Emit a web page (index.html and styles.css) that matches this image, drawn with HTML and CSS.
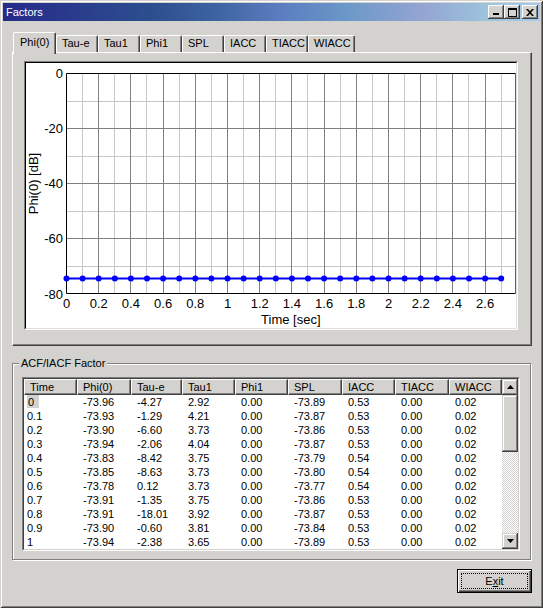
FILE: index.html
```html
<!DOCTYPE html>
<html>
<head>
<meta charset="utf-8">
<title>Factors</title>
<link rel="stylesheet" href="styles.css">
</head>
<body>
<div class="window">
  <div class="titlebar">
    <span class="title">Factors</span>
    <div class="caption-buttons">
      <span class="cbtn"><svg width="8" height="8" viewBox="0 0 8 8"><rect x="1" y="5" width="6" height="2" fill="#000"/></svg></span>
      <span class="cbtn"><svg width="9" height="9" viewBox="0 0 9 9"><rect x="0.5" y="0.5" width="8" height="8" fill="none" stroke="#000"/><rect x="0" y="0" width="9" height="2" fill="#000"/></svg></span>
      <span class="cbtn close"><svg width="8" height="7" viewBox="0 0 8 7"><path d="M0 0h2l2 2.2L6 0h2L5 3.5 8 7H6L4 4.8 2 7H0l3-3.5z" fill="#000"/></svg></span>
    </div>
  </div>
  <div class="main">
    <div class="tabs">
      <div class="tab selected">Phi(0)</div>
      <div class="tab">Tau-e</div>
      <div class="tab">Tau1</div>
      <div class="tab">Phi1</div>
      <div class="tab">SPL</div>
      <div class="tab">IACC</div>
      <div class="tab">TIACC</div>
      <div class="tab wide">WIACC</div>
    </div>
    <div class="tabpanel">
      <div class="chart">
        <div class="chart-inner">
          <svg class="plot" width="490" height="265" viewBox="0 0 490 265">
            <rect x="0" y="0" width="490" height="265" fill="#fff"/>
            <path d="M56.5 10.5V230.5M88.5 10.5V230.5M120.5 10.5V230.5M153.5 10.5V230.5M185.5 10.5V230.5M217.5 10.5V230.5M249.5 10.5V230.5M281.5 10.5V230.5M314.5 10.5V230.5M346.5 10.5V230.5M378.5 10.5V230.5M410.5 10.5V230.5M442.5 10.5V230.5M475.5 10.5V230.5M40.5 38.5H489.5M40.5 93.5H489.5M40.5 148.5H489.5M40.5 203.5H489.5" stroke="#c8c8c8" stroke-width="1" fill="none"/>
            <path d="M72.5 10.5V230.5M104.5 10.5V230.5M137.5 10.5V230.5M169.5 10.5V230.5M201.5 10.5V230.5M233.5 10.5V230.5M265.5 10.5V230.5M298.5 10.5V230.5M330.5 10.5V230.5M362.5 10.5V230.5M394.5 10.5V230.5M426.5 10.5V230.5M459.5 10.5V230.5M40.5 65.5H489.5M40.5 120.5H489.5M40.5 175.5H489.5" stroke="#808080" stroke-width="1" fill="none"/>
            <path d="M489.5 10.5V230.5" stroke="#606060" stroke-width="1"/>
            <path d="M40.5 10.5H489.5M40.5 10.5V230.5H489.5" stroke="#000" stroke-width="1" fill="none"/>
            <g class="ylab" text-anchor="end">
              <text x="37" y="15">0</text>
              <text x="37" y="70">-20</text>
              <text x="37" y="125">-40</text>
              <text x="37" y="180">-60</text>
              <text x="37" y="236">-80</text>
            </g>
            <g class="xlab" text-anchor="middle">
              <text x="40.5" y="245">0</text>
              <text x="72.7" y="245">0.2</text>
              <text x="104.9" y="245">0.4</text>
              <text x="137.1" y="245">0.6</text>
              <text x="169.3" y="245">0.8</text>
              <text x="201.5" y="245">1</text>
              <text x="233.7" y="245">1.2</text>
              <text x="265.9" y="245">1.4</text>
              <text x="298.1" y="245">1.6</text>
              <text x="330.3" y="245">1.8</text>
              <text x="362.5" y="245">2</text>
              <text x="394.7" y="245">2.2</text>
              <text x="426.9" y="245">2.4</text>
              <text x="459.1" y="245">2.6</text>
            </g>
            <text class="axis-title" x="264.8" y="261" text-anchor="middle">Time [sec]</text>
            <text class="axis-title" transform="translate(11.5 120.5) rotate(-90)" text-anchor="middle">Phi(0) [dB]</text>
            <polyline points="40.5,215.5 475.2,215.5" stroke="#0000ff" stroke-width="2" fill="none"/>
            <g fill="#0000ff">
              <circle cx="40.5" cy="215.5" r="3"/>
              <circle cx="56.6" cy="215.5" r="3"/>
              <circle cx="72.7" cy="215.5" r="3"/>
              <circle cx="88.8" cy="215.5" r="3"/>
              <circle cx="104.9" cy="215.5" r="3"/>
              <circle cx="121.0" cy="215.5" r="3"/>
              <circle cx="137.1" cy="215.5" r="3"/>
              <circle cx="153.2" cy="215.5" r="3"/>
              <circle cx="169.3" cy="215.5" r="3"/>
              <circle cx="185.4" cy="215.5" r="3"/>
              <circle cx="201.5" cy="215.5" r="3"/>
              <circle cx="217.6" cy="215.5" r="3"/>
              <circle cx="233.7" cy="215.5" r="3"/>
              <circle cx="249.8" cy="215.5" r="3"/>
              <circle cx="265.9" cy="215.5" r="3"/>
              <circle cx="282.0" cy="215.5" r="3"/>
              <circle cx="298.1" cy="215.5" r="3"/>
              <circle cx="314.2" cy="215.5" r="3"/>
              <circle cx="330.3" cy="215.5" r="3"/>
              <circle cx="346.4" cy="215.5" r="3"/>
              <circle cx="362.5" cy="215.5" r="3"/>
              <circle cx="378.6" cy="215.5" r="3"/>
              <circle cx="394.7" cy="215.5" r="3"/>
              <circle cx="410.8" cy="215.5" r="3"/>
              <circle cx="426.9" cy="215.5" r="3"/>
              <circle cx="443.0" cy="215.5" r="3"/>
              <circle cx="459.1" cy="215.5" r="3"/>
              <circle cx="475.2" cy="215.5" r="3"/>
            </g>
          </svg>
        </div>
      </div>
    </div>
    <div class="groupbox">
      <div class="group-label">ACF/IACF Factor</div>
      <div class="listview">
        <div class="lv-inner">
          <div class="lv-table">
            <div class="lv-header">
              <div class="hc">Time</div><div class="hc">Phi(0)</div><div class="hc">Tau-e</div><div class="hc">Tau1</div><div class="hc">Phi1</div><div class="hc">SPL</div><div class="hc">IACC</div><div class="hc">TIACC</div><div class="hc">WIACC</div>
            </div>
            <div class="lv-row"><span class="c t"><span class="sel">0</span></span><span class="c">-73.96</span><span class="c">-4.27</span><span class="c">2.92</span><span class="c">0.00</span><span class="c">-73.89</span><span class="c">0.53</span><span class="c">0.00</span><span class="c">0.02</span></div>
            <div class="lv-row"><span class="c t">0.1</span><span class="c">-73.93</span><span class="c">-1.29</span><span class="c">4.21</span><span class="c">0.00</span><span class="c">-73.87</span><span class="c">0.53</span><span class="c">0.00</span><span class="c">0.02</span></div>
            <div class="lv-row"><span class="c t">0.2</span><span class="c">-73.90</span><span class="c">-6.60</span><span class="c">3.73</span><span class="c">0.00</span><span class="c">-73.86</span><span class="c">0.53</span><span class="c">0.00</span><span class="c">0.02</span></div>
            <div class="lv-row"><span class="c t">0.3</span><span class="c">-73.94</span><span class="c">-2.06</span><span class="c">4.04</span><span class="c">0.00</span><span class="c">-73.87</span><span class="c">0.53</span><span class="c">0.00</span><span class="c">0.02</span></div>
            <div class="lv-row"><span class="c t">0.4</span><span class="c">-73.83</span><span class="c">-8.42</span><span class="c">3.75</span><span class="c">0.00</span><span class="c">-73.79</span><span class="c">0.54</span><span class="c">0.00</span><span class="c">0.02</span></div>
            <div class="lv-row"><span class="c t">0.5</span><span class="c">-73.85</span><span class="c">-8.63</span><span class="c">3.73</span><span class="c">0.00</span><span class="c">-73.80</span><span class="c">0.54</span><span class="c">0.00</span><span class="c">0.02</span></div>
            <div class="lv-row"><span class="c t">0.6</span><span class="c">-73.78</span><span class="c">0.12</span><span class="c">3.73</span><span class="c">0.00</span><span class="c">-73.77</span><span class="c">0.54</span><span class="c">0.00</span><span class="c">0.02</span></div>
            <div class="lv-row"><span class="c t">0.7</span><span class="c">-73.91</span><span class="c">-1.35</span><span class="c">3.75</span><span class="c">0.00</span><span class="c">-73.86</span><span class="c">0.53</span><span class="c">0.00</span><span class="c">0.02</span></div>
            <div class="lv-row"><span class="c t">0.8</span><span class="c">-73.91</span><span class="c">-18.01</span><span class="c">3.92</span><span class="c">0.00</span><span class="c">-73.87</span><span class="c">0.53</span><span class="c">0.00</span><span class="c">0.02</span></div>
            <div class="lv-row"><span class="c t">0.9</span><span class="c">-73.90</span><span class="c">-0.60</span><span class="c">3.81</span><span class="c">0.00</span><span class="c">-73.84</span><span class="c">0.53</span><span class="c">0.00</span><span class="c">0.02</span></div>
            <div class="lv-row"><span class="c t">1</span><span class="c">-73.94</span><span class="c">-2.38</span><span class="c">3.65</span><span class="c">0.00</span><span class="c">-73.89</span><span class="c">0.53</span><span class="c">0.00</span><span class="c">0.02</span></div>
          </div>
          <div class="vscroll">
            <div class="sb-btn"><svg width="7" height="4" viewBox="0 0 7 4"><path d="M3.5 0L7 4H0z" fill="#000"/></svg></div>
            <div class="sb-thumb"></div>
            <div class="sb-track"></div>
            <div class="sb-btn"><svg width="7" height="4" viewBox="0 0 7 4"><path d="M0 0H7L3.5 4z" fill="#000"/></svg></div>
          </div>
        </div>
      </div>
    </div>
    <div class="footer">
      <button class="btn default" type="button"><span class="focus">E<u>x</u>it</span></button>
    </div>
  </div>
</div>
</body>
</html>
```

FILE: styles.css
```css
* { box-sizing: border-box; }
html, body { margin: 0; padding: 0; }
body {
  width: 543px;
  height: 608px;
  overflow: hidden;
  background: #d4d2ce;
  font-family: "Liberation Sans", Arial, sans-serif;
  font-size: 11px;
  color: #000;
}
.window {
  width: 543px;
  height: 608px;
  padding: 3px;
  background: #d4d2ce;
  box-shadow: inset 1px 1px #d4d2ce, inset -1px -1px #404040, inset 2px 2px #fff, inset -2px -2px #808080;
  display: flex;
  flex-direction: column;
}
.titlebar {
  height: 18px;
  flex: none;
  display: flex;
  align-items: center;
  padding: 0 2px 0 2px;
  background: linear-gradient(to right, #262a8a 0%, #2c4f8e 28%, #3f64a2 40%, #5b7ec0 52%, #6b98c8 64%, #94a4d2 78%, #9cc4dc 90%, #a6caf0 100%);
}
.title {
  color: #fff;
  font-size: 11px;
  padding-left: 1px;
  line-height: 14px;
}
.caption-buttons {
  margin-left: auto;
  display: flex;
}
.cbtn {
  width: 16px;
  height: 14px;
  background: #d4d2ce;
  box-shadow: inset -1px -1px #404040, inset 1px 1px #fff, inset -2px -2px #808080, inset 2px 2px #d4d2ce;
  display: flex;
  align-items: center;
  justify-content: center;
}
.cbtn svg { display: block; }
.cbtn.close { margin-left: 2px; }
.main {
  flex: 1;
  display: flex;
  flex-direction: column;
  padding: 11px 8px 0 9px;
}
.tabs {
  display: flex;
  height: 20px;
  flex: none;
  align-items: flex-start;
}
.tab {
  width: 42px;
  height: 17px;
  margin-top: 3px;
  border-top: 1px solid #fff;
  border-left: 1px solid #fff;
  border-right: 1px solid #404040;
  border-radius: 2px 2px 0 0;
  box-shadow: inset -1px 0 #808080;
  padding-left: 5px;
  line-height: 15px;
  white-space: nowrap;
  background: #d4d2ce;
}
.tab.wide { width: 47px; }
.tab.selected {
  width: 43px;
  height: 22px;
  margin-top: 0;
  margin-left: 1px;
  margin-bottom: -2px;
  padding-top: 1px;
  padding-left: 6px;
  line-height: 17px;
  position: relative;
  z-index: 1;
}
.tabpanel {
  height: 294px;
  flex: none;
  border-top: 1px solid #fff;
  border-left: 1px solid #fff;
  border-right: 1px solid #404040;
  border-bottom: 1px solid #404040;
  box-shadow: inset -1px -1px #808080;
  padding: 8px 0 0 11px;
}
.chart {
  width: 494px;
  height: 269px;
  border: 1px solid;
  border-color: #808080 #fff #fff #808080;
}
.chart-inner {
  width: 100%;
  height: 100%;
  border: 1px solid;
  border-color: #000 #e0e0e0 #e0e0e0 #000;
  background: #fff;
}
.plot { display: block; }
.plot text {
  font-family: "Liberation Sans", Arial, sans-serif;
  font-size: 13px;
  fill: #000;
}
.groupbox {
  margin-top: 17px;
  width: 519px;
  height: 197px;
  flex: none;
  border: 1px solid #808080;
  box-shadow: inset 1px 1px #fff, 1px 1px #fff;
}
.group-label {
  width: fit-content;
  margin: -7px 0 0 6px;
  padding: 0 2px;
  height: 13px;
  line-height: 13px;
  background: #d4d2ce;
  white-space: nowrap;
}
.listview {
  margin: 7px 0 0 9px;
  width: 498px;
  height: 174px;
  border: 1px solid;
  border-color: #808080 #fff #fff #808080;
}
.lv-inner {
  height: 100%;
  border: 1px solid;
  border-color: #404040 #d4d2ce #d4d2ce #404040;
  background: #fff;
  display: flex;
}
.lv-table {
  flex: 1;
  overflow: hidden;
}
.lv-header, .lv-row {
  display: grid;
  grid-template-columns: 53px 54px 51px 53px 53px 54px 53px 54px 53px;
}
.hc {
  height: 16px;
  line-height: 14px;
  background: #d4d2ce;
  border-top: 1px solid #fff;
  border-left: 1px solid #fff;
  border-right: 1px solid #404040;
  border-bottom: 1px solid #404040;
  box-shadow: inset -1px -1px #808080;
  padding-left: 5px;
  white-space: nowrap;
  overflow: hidden;
}
.lv-row {
  height: 14px;
  line-height: 14px;
}
.c {
  padding-left: 6px;
  white-space: nowrap;
  overflow: hidden;
}
.c.t { padding-left: 3px; }
.sel {
  display: inline-block;
  background: #d4d2ce;
  padding: 0 5px 0 1px;
  height: 13px;
  line-height: 14px;
}
.vscroll {
  width: 16px;
  flex: none;
  display: flex;
  flex-direction: column;
}
.sb-btn, .sb-thumb {
  background: #d4d2ce;
  box-shadow: inset -1px -1px #404040, inset 1px 1px #d4d2ce, inset -2px -2px #808080, inset 2px 2px #fff;
}
.sb-btn {
  height: 16px;
  flex: none;
  display: flex;
  align-items: center;
  justify-content: center;
}
.sb-btn svg { display: block; }
.sb-thumb {
  height: 57px;
  flex: none;
}
.sb-track {
  flex: 1;
  background: repeating-conic-gradient(#fff 0 25%, #d4d2ce 0 50%) 0 0 / 2px 2px;
}
.footer {
  display: flex;
  justify-content: flex-end;
  margin-top: 9px;
}
.btn {
  width: 75px;
  height: 24px;
  margin: 0;
  padding: 3px;
  border: 1px solid #000;
  background: #d4d2ce;
  box-shadow: inset 1px 1px #fff, inset -1px -1px #404040, inset -2px -2px #808080;
  font-family: "Liberation Sans", Arial, sans-serif;
  font-size: 11px;
  color: #000;
}
.focus {
  display: flex;
  height: 100%;
  align-items: center;
  justify-content: center;
  border: 1px dotted #000;
}
```
